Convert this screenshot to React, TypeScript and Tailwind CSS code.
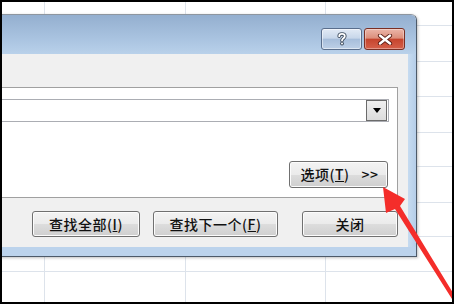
import React from 'react'

const rowHeights = ['h-[24px]', 'h-[36px]', 'h-[35px]', 'h-[36px]', 'h-[34px]', 'h-[36px]', 'h-[34px]', 'h-[35px]']
const colWidths = ['w-[43px]', 'w-[141px]', 'w-[140px]']

function Sheet() {
  return (
    <div className="flex flex-col h-full">
      {[...rowHeights, 'flex-1'].map((h, r) => (
        <div key={r} className={`flex shrink-0 ${h} ${r < rowHeights.length ? 'border-b border-[#dde3eb]' : ''}`}>
          {colWidths.map((w, c) => (
            <div key={c} className={`${w} shrink-0 border-r border-[#dde3eb]`} />
          ))}
          <div className="flex-1" />
        </div>
      ))}
    </div>
  )
}

const btn =
  'h-[26px] rounded-[3px] border border-[#707070] bg-[linear-gradient(#f3f3f3,#ebebeb_50%,#dddddd_50%,#cfcfcf)] shadow-[inset_0_0_0_1px_#fcfcfc] flex items-center justify-center text-[14px] tracking-[0.5px] font-medium text-[#111]'

function HelpButton() {
  return (
    <div className="w-[41px] h-[22px] rounded-[3px] border border-[#5a6e8c] bg-[linear-gradient(#e2eaf5,#c8d7ea_45%,#a7bedb_52%,#bdd0e7)] shadow-[inset_0_0_0_1px_rgba(255,255,255,0.5)] flex items-center justify-center">
      <svg width="10" height="14" viewBox="0 0 10 14">
        <path d="M2.2 4.2 C2.2 1.2 7.8 1.2 7.8 4.2 C7.8 6.2 5 6.4 5 8.6" fill="none" stroke="#3c4a5c" strokeWidth="3.6" strokeLinecap="round" />
        <circle cx="5" cy="11.6" r="1.9" fill="#3c4a5c" />
        <path d="M2.2 4.2 C2.2 1.2 7.8 1.2 7.8 4.2 C7.8 6.2 5 6.4 5 8.6" fill="none" stroke="#ffffff" strokeWidth="1.8" strokeLinecap="round" />
        <circle cx="5" cy="11.6" r="1" fill="#ffffff" />
      </svg>
    </div>
  )
}

function CloseButton() {
  return (
    <div className="w-[41px] h-[22px] rounded-[3px] border border-[#7a2f24] bg-[linear-gradient(#ebb6a9,#dc8f7c_45%,#c6452e_52%,#d5604a)] shadow-[inset_0_0_0_1px_rgba(255,255,255,0.35)] flex items-center justify-center">
      <svg width="16" height="11" viewBox="0 0 16 11">
        <path d="M3 1.5 L13 9.5 M13 1.5 L3 9.5" stroke="#5a1d14" strokeWidth="4.2" strokeLinecap="round" />
        <path d="M3 1.5 L13 9.5 M13 1.5 L3 9.5" stroke="#ffffff" strokeWidth="2.4" strokeLinecap="round" />
      </svg>
    </div>
  )
}

function FindDialog() {
  return (
    <div className="absolute left-[-12px] top-[12px] w-[427px] h-[243px] flex flex-col border border-[#4d5a69] border-t-[#8e969f] rounded-t-[6px] overflow-hidden shadow-[1px_1px_3px_rgba(0,0,0,0.25)] font-['Noto_Sans_CJK_SC',sans-serif]">
      <div className="h-[39px] shrink-0 bg-[linear-gradient(#94afcf,#a9c3e0_60%,#b9d1ea)] flex justify-end items-start pt-[13px] pr-[11px] gap-[2px]">
        <HelpButton />
        <CloseButton />
      </div>
      <div className="flex-1 flex bg-[#bcd3ec]">
        <div className="w-[9px] shrink-0" />
        <div className="flex-1 flex flex-col bg-[#f0f0f0] pt-[33px] pr-[10px]">
          <div className="h-[111px] border border-[#a0a0a0] border-l-0 bg-white flex flex-col pt-[11px] pr-[8px]">
            <div className="h-[23px] border border-[#abadb3] border-l-0 flex justify-end items-center pr-[1px]">
              <div className="w-[21px] h-[21px] border border-[#6b6b6b] bg-[linear-gradient(#f0f0f0,#dcdcdc)] flex items-center justify-center">
                <svg width="8" height="5" viewBox="0 0 8 5">
                  <path d="M0 0 H8 L4 5 Z" fill="#000" />
                </svg>
              </div>
            </div>
            <div className="flex justify-end mt-[39px] pr-[1px]">
              <div className={`${btn} w-[99px] h-[27px] gap-[12px] pl-[2px]`}>
                <span>选项(<u>T</u>)</span>
                <span>&gt;&gt;</span>
              </div>
            </div>
          </div>
          <div className="flex mt-[13px] pl-[32px]">
            <div className={`${btn} w-[108px]`}>查找全部(<u>I</u>)</div>
            <div className={`${btn} w-[125px] ml-[13px] border-[#3c7fb1] shadow-[inset_0_0_0_1px_#a9e2f8]`}>查找下一个(<u>F</u>)</div>
            <div className={`${btn} w-[96px] ml-[24px]`}>关闭</div>
          </div>
        </div>
        <div className="w-[9px] shrink-0 bg-[linear-gradient(90deg,#c6dbf0,#b3cce8)]" />
      </div>
      <div className="h-[9px] shrink-0 bg-[#bcd3ec]" />
    </div>
  )
}

function Arrow() {
  return (
    <svg className="absolute left-0 top-0 pointer-events-none" width="450" height="300" viewBox="2 2 450 300">
      <polygon points="383,187 405,199 400,206 458.5,302 455.2,304 395,209 386,213" fill="#f42d2a" />
    </svg>
  )
}

export default function App() {
  return (
    <div className="w-[454px] h-[304px] bg-black p-[2px]">
      <div className="relative w-full h-full overflow-hidden bg-white">
        <Sheet />
        <FindDialog />
        <Arrow />
      </div>
    </div>
  )
}
